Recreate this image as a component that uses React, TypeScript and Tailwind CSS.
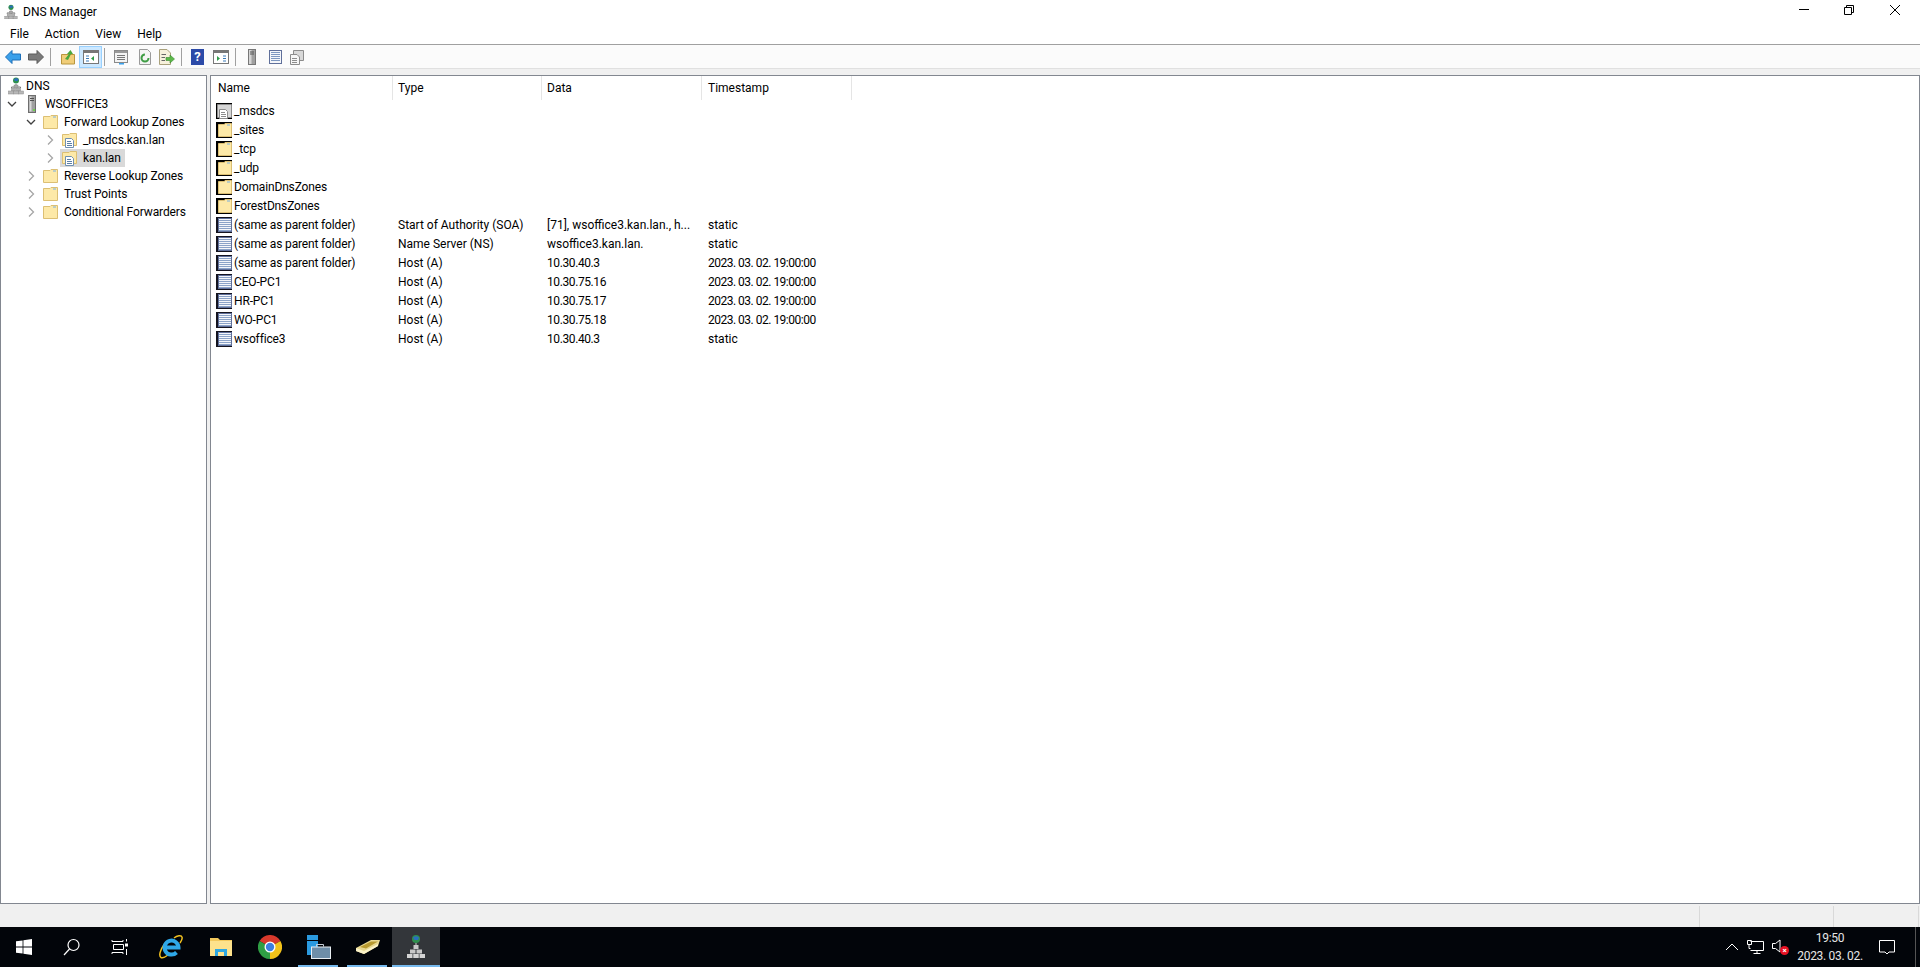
import type { ReactNode } from "react";

const FONT = "font-['Roboto','Noto_Sans',sans-serif]";

function DnsIcon() {
  return (
    <svg width="16" height="18" viewBox="0 0 16 18" className="shrink-0">
      <circle cx="8" cy="3.5" r="3" fill="#2f8f4e" />
      <path d="M6 2.5 Q8 0.5 10.5 2 L9.5 4 L7 4 Z" fill="#2a6fc0" />
      <path d="M8 7V9M3.5 11V10H12.5V11" stroke="#777" fill="none" />
      <rect x="6" y="8" width="4" height="3" fill="#a8a8a8" stroke="#8a8a8a" strokeWidth="0.5" />
      <rect x="3.5" y="11" width="4" height="3" fill="#b0b0b0" stroke="#8a8a8a" strokeWidth="0.5" />
      <rect x="8.5" y="11" width="4" height="3" fill="#b0b0b0" stroke="#8a8a8a" strokeWidth="0.5" />
      <rect x="0.5" y="14" width="5" height="3" fill="#b8b8b8" stroke="#8a8a8a" strokeWidth="0.5" />
      <rect x="5.5" y="14" width="5" height="3" fill="#b8b8b8" stroke="#8a8a8a" strokeWidth="0.5" />
      <rect x="10.5" y="14" width="5" height="3" fill="#b8b8b8" stroke="#8a8a8a" strokeWidth="0.5" />
    </svg>
  );
}

function ServerIcon() {
  return (
    <svg width="16" height="18" viewBox="0 0 16 18" className="shrink-0">
      <rect x="4.5" y="0.5" width="7" height="17" fill="#a0a0a0" stroke="#6e6e6e" />
      <rect x="5.5" y="1.5" width="2" height="15" fill="#d8d8d8" />
      <path d="M6 3.5H10M6 5.5H10" stroke="#505050" />
      <rect x="9" y="14" width="2" height="2" fill="#6fd14f" />
    </svg>
  );
}

function FolderIcon({ shadow = false }: { shadow?: boolean }) {
  return (
    <svg width="16" height="16" viewBox="0 0 16 16" className="shrink-0">
      {shadow && <rect x="0" y="0" width="16" height="16" fill="#000" />}
      <path
        d={shadow ? "M2.5 2.5H8L9 1.5H15.5V14.5H2.5Z" : "M0.5 2.5H7L8 1.5H14.5V14.5H0.5Z"}
        fill="#fde9a8"
        stroke="#dcbf73"
      />
      <rect x={shadow ? 11 : 10} y="2.5" width="3" height="1" fill="#7ab0e0" />
    </svg>
  );
}

function ZoneIcon({ grey = false }: { grey?: boolean }) {
  const body = grey ? "#d6d6d6" : "#fde9a8";
  const edge = grey ? "#8c8c8c" : "#dcbf73";
  return (
    <svg width="16" height="16" viewBox="0 0 16 16" className="shrink-0">
      {grey && <rect x="0" y="0" width="16" height="16" fill="#000" />}
      <path d={grey ? "M1.5 1.5H15.5V14.5H1.5Z" : "M0.5 2.5H7L8 1.5H14.5V13.5H0.5Z"} fill={body} stroke={edge} />
      <path d="M3.5 6.5H9.5L11.5 8.5V15.5H3.5Z" fill="#fff" stroke={grey ? "#8c8c8c" : "#6f8fb0"} />
      <path d="M5 9.5H9M5 11.5H10M5 13.5H10" stroke={grey ? "#8c8c8c" : "#5b7fa6"} />
    </svg>
  );
}

function RecordIcon() {
  return (
    <svg width="16" height="16" viewBox="0 0 16 16" className="shrink-0">
      <rect x="0" y="0" width="16" height="16" fill="#14141f" />
      <rect x="2.5" y="1.5" width="13" height="13" fill="#f4f6fa" stroke="#5f6f9a" />
      <path d="M3 3.5H15M3 5.5H15M3 7.5H15M3 9.5H15M3 11.5H15M3 13.5H15" stroke="#8ba3c8" />
    </svg>
  );
}

function Chevron({ open }: { open?: boolean }) {
  return (
    <svg width="16" height="16" viewBox="0 0 16 16" className="shrink-0">
      {open ? (
        <path d="M4 6L8 10L12 6" stroke="#404040" strokeWidth="1.3" fill="none" />
      ) : (
        <path d="M6 3.5L10.5 8L6 12.5" stroke="#a6a6a6" strokeWidth="1.3" fill="none" />
      )}
    </svg>
  );
}

function TreeRow({
  indent,
  chevron,
  icon,
  label,
  selected,
}: {
  indent: string;
  chevron?: "open" | "closed";
  icon: ReactNode;
  label: string;
  selected?: boolean;
}) {
  return (
    <div className={`flex h-[18px] items-center ${indent}`}>
      <span className="w-[18px] shrink-0">
        {chevron && <Chevron open={chevron === "open"} />}
      </span>
      <span className={`flex h-[18px] items-center pl-[2px] pr-[4px] ${selected ? "bg-[#d9d9d9]" : ""}`}>
        {icon}
        <span className="ml-[5px] whitespace-nowrap tracking-[-0.1px]">{label}</span>
      </span>
    </div>
  );
}

const records = [
  { name: "_msdcs", icon: "zone" },
  { name: "_sites", icon: "folder" },
  { name: "_tcp", icon: "folder" },
  { name: "_udp", icon: "folder" },
  { name: "DomainDnsZones", icon: "folder" },
  { name: "ForestDnsZones", icon: "folder" },
  { name: "(same as parent folder)", icon: "rec", type: "Start of Authority (SOA)", data: "[71], wsoffice3.kan.lan., h...", ts: "static" },
  { name: "(same as parent folder)", icon: "rec", type: "Name Server (NS)", data: "wsoffice3.kan.lan.", ts: "static" },
  { name: "(same as parent folder)", icon: "rec", type: "Host (A)", data: "10.30.40.3", ip: true, ts: "2023. 03. 02. 19:00:00", dated: true },
  { name: "CEO-PC1", icon: "rec", type: "Host (A)", data: "10.30.75.16", ip: true, ts: "2023. 03. 02. 19:00:00", dated: true },
  { name: "HR-PC1", icon: "rec", type: "Host (A)", data: "10.30.75.17", ip: true, ts: "2023. 03. 02. 19:00:00", dated: true },
  { name: "WO-PC1", icon: "rec", type: "Host (A)", data: "10.30.75.18", ip: true, ts: "2023. 03. 02. 19:00:00", dated: true },
  { name: "wsoffice3", icon: "rec", type: "Host (A)", data: "10.30.40.3", ip: true, ts: "static" },
];

function ToolSep() {
  return <span className="ml-[6px] h-[18px] w-px bg-[#a0a0a0]" />;
}

function Toolbar() {
  return (
    <div className="flex h-[23px] items-center bg-[#fbfbfb] pl-[5px]">
      {/* back */}
      <svg width="16" height="14" viewBox="0 0 16 14">
        <path d="M0.5 7L7 0.5V4H15.5V10H7V13.5Z" fill="#3aa0ea" stroke="#1c6fb8" />
      </svg>
      {/* forward */}
      <svg width="16" height="14" viewBox="0 0 16 14" className="ml-[7px]">
        <path d="M15.5 7L9 0.5V4H0.5V10H9V13.5Z" fill="#7a7a7a" stroke="#5a5a5a" />
      </svg>
      <ToolSep />
      {/* up folder */}
      <svg width="16" height="16" viewBox="0 0 16 16" className="ml-[9px]">
        <path d="M1.5 5.5H14.5V15H1.5Z" fill="#f0cd78" stroke="#b8963e" />
        <path d="M5 10L9 5H7L10.5 1L13 5H11L8 11Z" fill="#4aa83c" />
      </svg>
      {/* show/hide tree, pressed */}
      <span className="ml-[3px] flex h-[22px] w-[23px] items-center justify-center border border-[#99d1ff] bg-[#cce8ff]">
        <svg width="16" height="14" viewBox="0 0 16 14">
          <rect x="0.5" y="0.5" width="15" height="13" fill="#fff" stroke="#777" />
          <rect x="1" y="1" width="14" height="2" fill="#777" />
          <path d="M3 6H6M3 8.5H6M3 11H6" stroke="#3a7ab8" />
          <path d="M11 6V11L8 8.5Z" fill="#2f9c4a" />
        </svg>
      </span>
      <span className="ml-[2px] h-[18px] w-px bg-[#a0a0a0]" />
      {/* properties */}
      <svg width="16" height="16" viewBox="0 0 16 16" className="ml-[8px]">
        <rect x="1.5" y="1.5" width="13" height="12" fill="#f4f4f4" stroke="#8a8a8a" />
        <rect x="2" y="2" width="12" height="2" fill="#9a9a9a" />
        <path d="M4 6.5H12M4 8.5H12M4 10.5H12" stroke="#777" />
        <rect x="6" y="14" width="5" height="1.5" fill="#3aa0ea" />
      </svg>
      {/* refresh */}
      <svg width="14" height="16" viewBox="0 0 14 16" className="ml-[9px]">
        <path d="M1.5 0.5H9.5L12.5 3.5V15.5H1.5Z" fill="#f4f4f4" stroke="#9a9a9a" />
        <circle cx="7" cy="9" r="3.5" fill="none" stroke="#3f9d45" strokeWidth="2" strokeDasharray="16 6" />
      </svg>
      {/* export */}
      <svg width="16" height="16" viewBox="0 0 16 16" className="ml-[7px]">
        <path d="M0.5 0.5H8L11.5 4V15.5H0.5Z" fill="#f7f1dc" stroke="#a9a17c" />
        <path d="M2.5 5.5H7M2.5 8.5H6M2.5 11.5H6" stroke="#666" />
        <path d="M7 8.5H11V6L15.5 10L11 14V11.5H7Z" fill="#5cb84a" stroke="#3b8a2e" strokeWidth="0.6" />
      </svg>
      <ToolSep />
      {/* help */}
      <span className="ml-[9px] flex h-[16px] w-[13px] items-center justify-center bg-[#2c4aa8] text-[13px] font-bold text-white">?</span>
      {/* mmc action pane */}
      <svg width="16" height="14" viewBox="0 0 16 14" className="ml-[9px]">
        <rect x="0.5" y="0.5" width="15" height="13" fill="#fff" stroke="#777" />
        <rect x="1" y="1" width="14" height="2" fill="#777" />
        <path d="M4 6V11L7 8.5Z" fill="#2f9c4a" />
        <path d="M10 6H13M10 8.5H13M10 11H13" stroke="#3a7ab8" />
      </svg>
      <ToolSep />
      {/* server */}
      <svg width="16" height="18" viewBox="0 0 16 18" className="ml-[8px]">
        <rect x="4.5" y="1.5" width="7" height="15" fill="#a0a0a0" stroke="#777" />
        <rect x="5" y="2" width="2.5" height="14" fill="#d5d5d5" />
        <path d="M6 4H10M6 6H10" stroke="#555" />
      </svg>
      {/* list */}
      <svg width="16" height="16" viewBox="0 0 16 16" className="ml-[7px]">
        <rect x="2.5" y="1.5" width="12" height="13" fill="#f4f6fa" stroke="#5f6f9a" />
        <path d="M4 3.5H13M4 5.5H13M4 7.5H13M4 9.5H13M4 11.5H13" stroke="#7d97c0" />
      </svg>
      {/* zone grey */}
      <svg width="16" height="16" viewBox="0 0 16 16" className="ml-[6px]">
        <path d="M4.5 1.5H14.5V11.5H4.5Z" fill="#d8d8d8" stroke="#8c8c8c" />
        <path d="M1.5 5.5H8L10.5 8V15.5H1.5Z" fill="#f6f6f6" stroke="#8c8c8c" />
        <path d="M3 9.5H8M3 11.5H8M3 13.5H8" stroke="#8c8c8c" />
      </svg>
    </div>
  );
}

function Taskbar() {
  return (
    <div className="flex h-[40px] items-center bg-[#02050a]">
      {/* start */}
      <span className="flex h-[40px] w-[48px] items-center justify-center">
        <svg width="16" height="16" viewBox="0 0 16 16">
          <path d="M0 2.3L6.6 1.4V7.6H0ZM7.4 1.3L16 0V7.6H7.4ZM0 8.4H6.6V14.6L0 13.7ZM7.4 8.4H16V16L7.4 14.7Z" fill="#fff" />
        </svg>
      </span>
      {/* search */}
      <span className="flex h-[40px] w-[48px] items-center justify-center">
        <svg width="18" height="18" viewBox="0 0 18 18" fill="none" stroke="#fff" strokeWidth="1.2">
          <circle cx="10.5" cy="7" r="5.5" />
          <path d="M6.5 11L1 17" />
        </svg>
      </span>
      {/* task view */}
      <span className="flex h-[40px] w-[48px] items-center justify-center">
        <svg width="18" height="16" viewBox="0 0 18 16" fill="none" stroke="#fff">
          <path d="M1 1V2.5H12V1M2.5 5.5H12.5V10.5H2.5ZM1 15V13.5H12V15" />
          <rect x="14" y="4.5" width="3" height="3" fill="#fff" stroke="none" />
          <path d="M15.5 0V2.5M15.5 10V16" />
        </svg>
      </span>
      {/* internet explorer */}
      <span className="ml-[2px] flex h-[40px] w-[50px] items-center justify-center">
        <svg width="24" height="24" viewBox="0 0 24 24" fill="none">
          <path d="M5.5 9C1 15 -0.5 21 2 22.5C4 23.5 7 21.5 9 20" stroke="#f0c020" strokeWidth="1.5" />
          <path d="M15 3C18 0.5 22.5 0 23 2C23.5 3.5 22.5 6 21 8" stroke="#f0c020" strokeWidth="1.5" />
          <path d="M7 12.5H19.5A7 7 0 1 0 17.5 17.5" stroke="#2fa8e8" strokeWidth="4" />
        </svg>
      </span>
      {/* file explorer */}
      <span className="flex h-[40px] w-[49px] items-center justify-center">
        <svg width="22" height="18" viewBox="0 0 22 18">
          <path d="M0 0H8L10 2H22V18H0Z" fill="#f3c95c" />
          <path d="M0 3H22V18H0Z" fill="#fde28c" />
          <path d="M5 18V11H17V18H14V14H8V18Z" fill="#2fa7e0" />
        </svg>
      </span>
      {/* chrome */}
      <span className="flex h-[40px] w-[49px] items-center justify-center">
        <svg width="24" height="24" viewBox="0 0 24 24">
          <path d="M12 12L1.6 6A12 12 0 0 1 22.4 6Z" fill="#d8392c" />
          <path d="M12 12L22.4 6A12 12 0 0 1 12 24Z" fill="#f2c21a" />
          <path d="M12 12L12 24A12 12 0 0 1 1.6 6Z" fill="#2f9e44" />
          <circle cx="12" cy="12" r="5.5" fill="#fff" />
          <circle cx="12" cy="12" r="4.2" fill="#3d7fe0" />
        </svg>
      </span>
      {/* server manager */}
      <span className="relative flex h-[40px] w-[49px] items-center justify-center">
        <svg width="24" height="24" viewBox="0 0 24 24">
          <rect x="0" y="0" width="11" height="20" fill="#2a9ae0" />
          <rect x="0" y="5" width="11" height="1" fill="#02050a" />
          <path d="M9.5 11.5V9.5H16.5V11.5" stroke="#c8d0d8" fill="none" />
          <rect x="4.5" y="12" width="19" height="11.5" fill="#6e8ea8" stroke="#e8eef2" />
        </svg>
        <span className="absolute bottom-0 left-[4px] h-[2px] w-[40px] bg-[#76b9ed]" />
      </span>
      {/* book */}
      <span className="relative flex h-[40px] w-[49px] items-center justify-center">
        <svg width="24" height="16" viewBox="0 0 24 16">
          <path d="M0 9L15 1H24L22 7L8 15L0 12Z" fill="#e8d890" />
          <path d="M4 8L15 2.5H22L10 9.5Z" fill="#b89a30" />
          <path d="M0 9L8 12L22 5V7L8 15L0 12Z" fill="#fbf3c8" />
        </svg>
        <span className="absolute bottom-0 left-[4px] h-[2px] w-[40px] bg-[#76b9ed]" />
      </span>
      {/* dns, active */}
      <span className="relative flex h-[40px] w-[48px] items-center justify-center bg-[#33363a]">
        <svg width="20" height="24" viewBox="0 0 20 24">
          <circle cx="10" cy="4" r="4" fill="#2f8f4e" />
          <path d="M7 2.5Q10 0 13 2.5L12 5L8.5 5Z" fill="#2a6fc0" />
          <path d="M10 8V10" stroke="#ccc" />
          <rect x="7.5" y="10" width="5" height="4" fill="#c8c8c8" />
          <rect x="4" y="14.5" width="5.5" height="4" fill="#c8c8c8" />
          <rect x="10.5" y="14.5" width="5.5" height="4" fill="#c8c8c8" />
          <rect x="1" y="19" width="5.5" height="4" fill="#d4d4d4" />
          <rect x="7.25" y="19" width="5.5" height="4" fill="#d4d4d4" />
          <rect x="13.5" y="19" width="5.5" height="4" fill="#d4d4d4" />
        </svg>
        <span className="absolute inset-x-0 bottom-0 h-[2px] bg-[#76b9ed]" />
      </span>
      <span className="flex-1" />
      {/* tray */}
      <svg width="14" height="8" viewBox="0 0 14 8" fill="none" stroke="#fff" className="mr-[8px]">
        <path d="M1 7L7 1L13 7" />
      </svg>
      <svg width="17" height="14" viewBox="0 0 17 14" fill="none" stroke="#fff" className="mr-[8px]">
        <path d="M3.5 1.5H16.5V10.5H3.5M0.5 0.5H4.5V4.5H0.5ZM2 4.5V8.5H3.5M10 10.5V13.5M6.5 13.5H13.5" />
      </svg>
      <span className="relative mr-[2px] block h-[16px] w-[17px]">
        <svg width="10" height="14" viewBox="0 0 10 14" fill="none" stroke="#fff">
          <path d="M0.5 4.5H3.5L8 1V13L3.5 9.5H0.5Z" />
        </svg>
        <span className="absolute bottom-0 right-0 flex h-[9px] w-[9px] items-center justify-center rounded-full bg-[#e81123] text-[8px] font-bold leading-none text-white">×</span>
      </span>
      <div className="flex w-[78px] flex-col items-center text-[12px] leading-[18px] tracking-[-0.3px] text-[#e6e6e6]">
        <span>19:50</span>
        <span className="whitespace-nowrap">2023. 03. 02.</span>
      </div>
      <span className="flex w-[36px] items-center justify-center">
        <svg width="16" height="16" viewBox="0 0 16 16" fill="none" stroke="#fff">
          <path d="M0.5 1.5H15.5V13H10L8 15L6 13H0.5Z" />
        </svg>
      </span>
      <span className="ml-[10px] h-[40px] w-px bg-[#555]" />
      <span className="w-[4px]" />
    </div>
  );
}

export default function App() {
  return (
    <div className={`flex h-[967px] w-[1920px] flex-col overflow-hidden bg-[#f0f0f0] text-[12px] leading-[16px] text-black ${FONT}`}>
      {/* Title bar */}
      <div className="flex h-[23px] items-center bg-white pl-[3px] pr-[2px]">
        <span className="scale-[0.85]"><DnsIcon /></span>
        <span className="ml-[4px]">DNS Manager</span>
        <span className="flex-1" />
        <span className="flex h-[20px] w-[45px] items-center justify-center self-start">
          <svg width="10" height="10" viewBox="0 0 10 10" stroke="#000"><path d="M0 4.5H10" /></svg>
        </span>
        <span className="flex h-[20px] w-[46px] items-center justify-center self-start">
          <svg width="10" height="10" viewBox="0 0 10 10" fill="none" stroke="#000"><path d="M0.5 2.5H7.5V9.5H0.5ZM2.5 2.5V0.5H9.5V7.5H7.5" /></svg>
        </span>
        <span className="flex h-[20px] w-[46px] items-center justify-center self-start">
          <svg width="10" height="10" viewBox="0 0 10 10" stroke="#000"><path d="M0 0L10 10M10 0L0 10" /></svg>
        </span>
      </div>

      {/* Menu bar */}
      <div className="flex h-[22px] items-center gap-[16px] border-b border-[#a0a0a0] bg-white pl-[10px]">
        <span>File</span>
        <span>Action</span>
        <span>View</span>
        <span>Help</span>
      </div>

      <Toolbar />
      <div className="h-[7px] border-t border-[#e0e0e0]" />

      {/* Panes */}
      <div className="flex min-h-0 flex-1 gap-[3px]">
        <div className="w-[207px] shrink-0 border border-[#828790] bg-white pt-[1px]">
          <div className="flex h-[18px] items-center pl-[7px]">
            <DnsIcon />
            <span className="ml-[2px]">DNS</span>
          </div>
          <TreeRow indent="pl-[3px]" chevron="open" icon={<ServerIcon />} label="WSOFFICE3" />
          <TreeRow indent="pl-[22px]" chevron="open" icon={<FolderIcon />} label="Forward Lookup Zones" />
          <TreeRow indent="pl-[41px]" chevron="closed" icon={<ZoneIcon />} label="_msdcs.kan.lan" />
          <TreeRow indent="pl-[41px]" chevron="closed" icon={<ZoneIcon />} label="kan.lan" selected />
          <TreeRow indent="pl-[22px]" chevron="closed" icon={<FolderIcon />} label="Reverse Lookup Zones" />
          <TreeRow indent="pl-[22px]" chevron="closed" icon={<FolderIcon />} label="Trust Points" />
          <TreeRow indent="pl-[22px]" chevron="closed" icon={<FolderIcon />} label="Conditional Forwarders" />
        </div>

        <div className="min-w-0 flex-1 border border-[#828790] bg-white">
          <div className="flex h-[24px] items-center">
            {[
              { label: "Name", cls: "w-[182px] pl-[7px]" },
              { label: "Type", cls: "w-[149px] pl-[5px]" },
              { label: "Data", cls: "w-[160px] pl-[5px]" },
              { label: "Timestamp", cls: "w-[150px] pl-[6px]" },
            ].map((c) => (
              <div key={c.label} className={`flex h-[24px] items-center border-r border-[#e5e5e5] ${c.cls}`}>
                {c.label}
              </div>
            ))}
          </div>
          <div className="pt-[1px]">
            {records.map((r, i) => (
              <div key={i} className="flex h-[19px] items-center">
                <div className="flex w-[182px] items-center pl-[5px]">
                  {r.icon === "zone" && <ZoneIcon grey />}
                  {r.icon === "folder" && <FolderIcon shadow />}
                  {r.icon === "rec" && <RecordIcon />}
                  <span className="ml-[2px] whitespace-nowrap tracking-[-0.15px]">{r.name}</span>
                </div>
                <div className="w-[149px] whitespace-nowrap pl-[5px]">{r.type}</div>
                <div className={`w-[160px] whitespace-nowrap pl-[5px] ${r.ip ? "tracking-[-0.4px]" : ""}`}>{r.data}</div>
                <div className={`w-[150px] whitespace-nowrap pl-[6px] ${r.dated ? "tracking-[-0.5px]" : ""}`}>{r.ts}</div>
              </div>
            ))}
          </div>
        </div>
      </div>

      {/* Status bar */}
      <div className="flex h-[23px] bg-[#f0f0f0] pt-[2px]">
        <span className="flex-1" />
        <span className="w-[134px] border-l border-[#d9d9d9]" />
        <span className="w-[85px] border-l border-[#d9d9d9]" />
        <span className="w-[2px] border-l border-[#d9d9d9]" />
      </div>

      <Taskbar />
    </div>
  );
}
